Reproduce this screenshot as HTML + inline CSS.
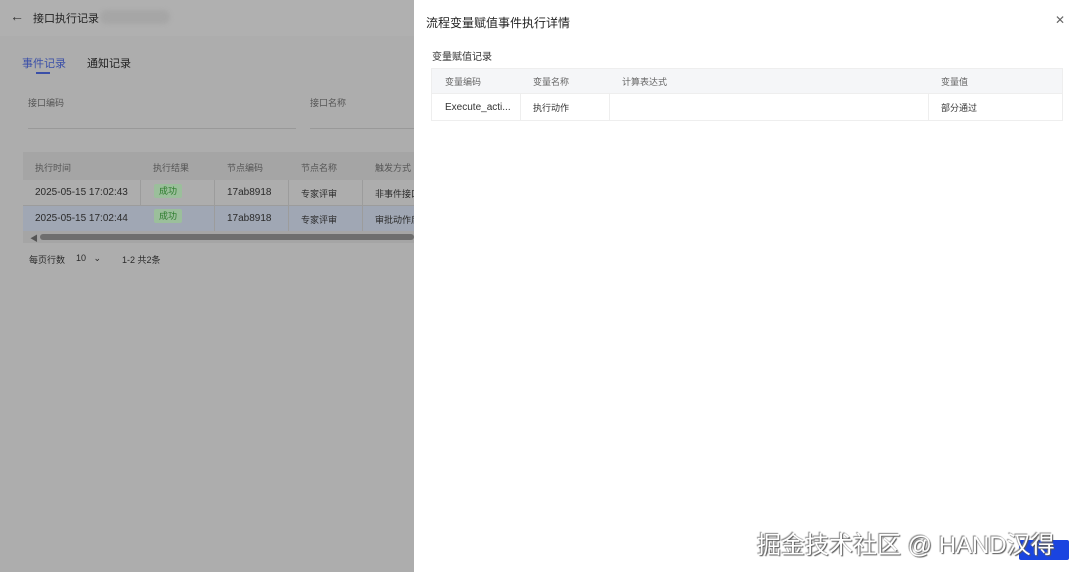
<!DOCTYPE html>
<html><head><meta charset="utf-8"><style>
*{margin:0;padding:0;box-sizing:border-box}
body{width:1080px;height:572px;overflow:hidden;position:relative;font-family:"Liberation Sans","Noto Sans CJK SC",sans-serif;background:#adadad;color:#2a2a2a}
.a{position:absolute;white-space:nowrap}
.s{font-size:10px}
</style></head><body>
<div class="a" style="left:0;top:0;width:414px;height:36px;background:#b0b0b0"></div>
<div class="a" style="left:10px;top:8px;font-size:14px;color:#333">&#8592;</div>
<div class="a" style="left:33px;top:10px;font-size:11px;color:#222">接口执行记录</div>
<div class="a" style="left:100px;top:10px;width:70px;height:14px;background:#a6a6a6;border-radius:7px;filter:blur(2px)"></div>
<div class="a" style="left:22px;top:55px;font-size:11px;color:#3a4fa8">事件记录</div>
<div class="a" style="left:36px;top:72px;width:14px;height:2px;background:#3a4fa8"></div>
<div class="a" style="left:87px;top:55px;font-size:11px;color:#222">通知记录</div>
<div class="a s" style="left:28px;top:96px;color:#555;font-size:9px">接口编码</div>
<div class="a s" style="left:310px;top:96px;color:#555;font-size:9px">接口名称</div>
<div class="a" style="left:28px;top:128px;width:268px;height:1px;background:#999"></div>
<div class="a" style="left:310px;top:128px;width:104px;height:1px;background:#999"></div>
<div class="a" style="left:23px;top:152px;width:391px;height:28px;background:#a5a5a5"></div>
<div class="a" style="left:23px;top:205px;width:391px;height:26px;background:#a0a7b4"></div>
<div class="a" style="left:140px;top:180px;width:1px;height:25px;background:#9c9c9c"></div>
<div class="a" style="left:214px;top:180px;width:1px;height:51px;background:#9c9c9c"></div>
<div class="a" style="left:288px;top:180px;width:1px;height:51px;background:#9c9c9c"></div>
<div class="a" style="left:362px;top:180px;width:1px;height:51px;background:#9c9c9c"></div>
<div class="a" style="left:23px;top:205px;width:391px;height:1px;background:#9c9c9c"></div>
<div class="a" style="left:35px;top:161px;font-size:9px;color:#555">执行时间</div>
<div class="a" style="left:153px;top:161px;font-size:9px;color:#555">执行结果</div>
<div class="a" style="left:227px;top:161px;font-size:9px;color:#555">节点编码</div>
<div class="a" style="left:301px;top:161px;font-size:9px;color:#555">节点名称</div>
<div class="a" style="left:375px;top:161px;font-size:9px;color:#555">触发方式</div>
<div class="a s" style="left:35px;top:187px">2025-05-15 17:02:43</div>
<div class="a s" style="left:35px;top:213px">2025-05-15 17:02:44</div>
<div class="a" style="left:154px;top:184px;width:28px;height:14px;background:#9bbf9b;border-radius:2px;font-size:9px;color:#2b7a2b;text-align:center;line-height:14px">成功</div>
<div class="a" style="left:154px;top:209px;width:28px;height:14px;background:#9bbf9b;border-radius:2px;font-size:9px;color:#2b7a2b;text-align:center;line-height:14px">成功</div>
<div class="a s" style="left:227px;top:187px">17ab8918</div>
<div class="a s" style="left:227px;top:213px">17ab8918</div>
<div class="a" style="left:301px;top:187px;font-size:9px">专家评审</div>
<div class="a" style="left:301px;top:213px;font-size:9px">专家评审</div>
<div class="a" style="left:375px;top:187px;font-size:9px">非事件接口</div>
<div class="a" style="left:375px;top:213px;font-size:9px">审批动作后</div>
<div class="a" style="left:23px;top:231px;width:391px;height:12px;background:#a5a5a5"></div>
<div class="a" style="left:30px;top:233px;font-size:8px;color:#555">&#9664;</div>
<div class="a" style="left:40px;top:234px;width:374px;height:6px;background:#6e6e6e;border-radius:3px"></div>
<div class="a" style="left:29px;top:253px;font-size:9px">每页行数</div>
<div class="a" style="left:76px;top:253px;font-size:9px">10 &nbsp;&nbsp;⌄</div>
<div class="a" style="left:122px;top:253px;font-size:9px">1-2 共2条</div>

<div class="a" style="left:414px;top:0;width:666px;height:572px;background:#fff"></div>
<div class="a" style="left:426px;top:14px;font-size:12px;color:#222">流程变量赋值事件执行详情</div>
<div class="a" style="left:1055px;top:13px;font-size:12px;color:#666">✕</div>
<div class="a" style="left:432px;top:48px;font-size:10px;color:#333">变量赋值记录</div>
<div class="a" style="left:431px;top:68px;width:632px;height:53px;border:1px solid #eee"></div>
<div class="a" style="left:432px;top:69px;width:630px;height:25px;background:#f5f6f8;border-bottom:1px solid #eee"></div>
<div class="a" style="left:520px;top:94px;width:1px;height:27px;background:#eee"></div>
<div class="a" style="left:609px;top:94px;width:1px;height:27px;background:#eee"></div>
<div class="a" style="left:928px;top:94px;width:1px;height:27px;background:#eee"></div>
<div class="a" style="left:445px;top:75px;font-size:9px;color:#666">变量编码</div>
<div class="a" style="left:533px;top:75px;font-size:9px;color:#666">变量名称</div>
<div class="a" style="left:622px;top:75px;font-size:9px;color:#666">计算表达式</div>
<div class="a" style="left:941px;top:75px;font-size:9px;color:#666">变量值</div>
<div class="a s" style="left:445px;top:102px;color:#333">Execute_acti...</div>
<div class="a" style="left:533px;top:101px;font-size:9px;color:#333">执行动作</div>
<div class="a" style="left:941px;top:101px;font-size:9px;color:#333">部分通过</div>
<div class="a" style="left:1019px;top:540px;width:50px;height:20px;background:#1a44e0;border-radius:2px"></div>
<div class="a" style="left:757px;top:525px;font-size:24px;color:#fff;text-shadow:1px 1px 1px #555,-1px -1px 1px #888">掘金技术社区 @ HAND汉得</div>
</body></html>
